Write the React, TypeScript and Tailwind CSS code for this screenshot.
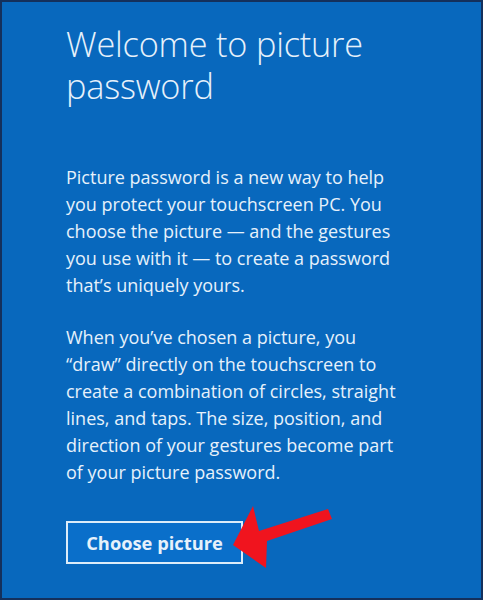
import React from 'react';

const paragraphOne = [
  'Picture password is a new way to help',
  'you protect your touchscreen PC. You',
  'choose the picture \u2014 and the gestures',
  'you use with it \u2014 to create a password',
  'that\u2019s uniquely yours.',
];

const paragraphTwo = [
  'When you\u2019ve chosen a picture, you',
  '\u201Cdraw\u201D directly on the touchscreen to',
  'create a combination of circles, straight',
  'lines, and taps. The size, position, and',
  'direction of your gestures become part',
  'of your picture password.',
];

// Red annotation arrow pointing at the button
const RedArrow = () => (
  <svg
    className="absolute left-[225px] top-[498px]"
    width="112"
    height="76"
    viewBox="0 0 112 76"
  >
    <polygon
      points="6,45 26,6 32,31 101,9 105,19 40,41 39,68"
      fill="#f0141e"
    />
  </svg>
);

export default function App() {
  return (
    <div className="relative w-[483px] h-[600px] bg-[#0868bd] border-2 border-[#14305c] font-['Open_Sans',sans-serif] text-[#e6f1fb]">
      <div className="pl-[64px] pt-[21px]">
        <h1 className="text-[34.3px] font-light leading-[42px] tracking-[-0.2px]">
          Welcome to picture
          <br />
          password
        </h1>

        <div className="mt-[57px] text-[18px] leading-[27px]">
          {paragraphOne.map((line, i) => (
            <div key={i} className="whitespace-nowrap">
              {line}
            </div>
          ))}
        </div>

        <div className="mt-[25px] text-[18px] leading-[27px]">
          {paragraphTwo.map((line, i) => (
            <div key={i} className="whitespace-nowrap">
              {line}
            </div>
          ))}
        </div>

        <button className="mt-[35px] w-[177px] h-[43px] border-2 border-[#dcecf9] bg-[#0a6fca] text-[18.3px] font-bold text-[#e6f1fb]">
          Choose picture
        </button>
      </div>

      <RedArrow />
    </div>
  );
}
